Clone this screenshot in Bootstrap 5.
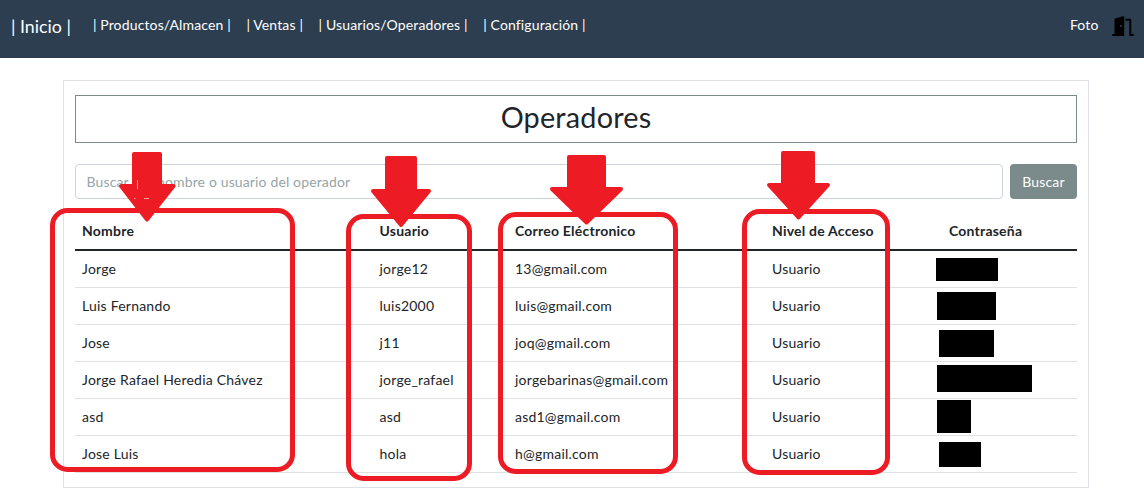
<!DOCTYPE html>
<html lang="es">
<head>
<meta charset="utf-8">
<title>Operadores</title>
<link href="https://cdn.jsdelivr.net/npm/bootstrap@5.3.0/dist/css/bootstrap.min.css" rel="stylesheet">
<style>
body{font-family:Lato,sans-serif;font-size:14px;line-height:1.5;color:#212529;overflow:hidden}
.topbar{background:#2c3e50;height:58px;padding:0 9px 0 11px;--bs-navbar-nav-link-padding-x:0}
.topbar a{color:#fff!important;white-space:nowrap}
.topbar .navbar-brand{font-size:17.8px;padding:0;margin:0 22px 7px 0;line-height:26px}
.topbar .navbar-nav{gap:15.5px;margin-bottom:8px}
.topbar .nav-link{padding:0;line-height:22px;letter-spacing:.14px}
.panel{width:1026px;height:408px;margin:22px 0 0 63px;padding:14px 11px;border:1px solid #dee2e6}
.heading{height:48px;border:1px solid #7b8a8b;font-size:28.8px;letter-spacing:.2px;font-weight:400;line-height:43px;margin:0 0 21px}
.search{gap:7px;margin-bottom:13px}
.search .form-control{height:35px;font-size:14px;letter-spacing:.14px;padding:5px 10.5px;border-color:#ced4da;border-radius:4px}
.search .form-control::placeholder{color:#95a5a6}
.search .btn{flex:none;width:67px;height:35px;background:#7b8a8b;color:#fff;font-size:14px;letter-spacing:.15px;padding:0;border-radius:4px}
.users{table-layout:fixed;margin:0;border-color:#dee2e6;letter-spacing:.22px}
.users th,.users td{height:37px;padding:0 7px;line-height:21px;vertical-align:middle;white-space:nowrap}
.users thead th{height:38px;border-bottom:2px solid #212529}
.marks{left:0;top:0}
</style>
<script src="https://cdn.jsdelivr.net/npm/bootstrap@5.3.0/dist/js/bootstrap.bundle.min.js"></script>
</head>
<body class="position-relative">
<nav class="navbar navbar-expand topbar">
  <a class="navbar-brand" href="#">| Inicio |</a>
  <div class="navbar-nav me-auto">
    <a class="nav-link" href="#">| Productos/Almacen |</a>
    <a class="nav-link" href="#">| Ventas |</a>
    <a class="nav-link" href="#">| Usuarios/Operadores |</a>
    <a class="nav-link" href="#">| Configuración |</a>
  </div>
  <div class="navbar-nav align-items-center">
    <a class="nav-link" href="#">Foto</a>
    <svg width="22" height="22" viewBox="0 0 22 22" style="margin:3px 1px 0 -2px"><path d="M2.5 3.5Q2.5 2.8 3.2 2.5L11 .2Q12.2 0 12.2 1V20H.8Q0 20 0 19T.8 18H2.5ZM13.5 2.8H18Q19.3 2.8 19.3 4V18H21Q22 18 22 19T21 20H17.3V4.8H13.5Z"/><circle cx="9" cy="10" r="1" fill="#2c3e50"/></svg>
  </div>
</nav>
<main class="panel">
  <h2 class="heading text-center">Operadores</h2>
  <form class="d-flex search">
    <input class="form-control" type="text" placeholder="Buscar por nombre o usuario del operador">
    <button class="btn" type="button">Buscar</button>
  </form>
  <table class="table users">
    <colgroup><col style="width:297.5px"><col style="width:135.5px"><col style="width:257px"><col style="width:177px"><col></colgroup>
    <thead><tr><th>Nombre</th><th>Usuario</th><th>Correo Eléctronico</th><th>Nivel de Acceso</th><th>Contraseña</th></tr></thead>
    <tbody>
      <tr><td>Jorge</td><td>jorge12</td><td>13@gmail.com</td><td>Usuario</td><td></td></tr>
      <tr><td>Luis Fernando</td><td>luis2000</td><td>luis@gmail.com</td><td>Usuario</td><td></td></tr>
      <tr><td>Jose</td><td>j11</td><td>joq@gmail.com</td><td>Usuario</td><td></td></tr>
      <tr><td>Jorge Rafael Heredia Chávez</td><td>jorge_rafael</td><td>jorgebarinas@gmail.com</td><td>Usuario</td><td></td></tr>
      <tr><td>asd</td><td>asd</td><td>asd1@gmail.com</td><td>Usuario</td><td></td></tr>
      <tr><td>Jose Luis</td><td>hola</td><td>h@gmail.com</td><td>Usuario</td><td></td></tr>
    </tbody>
  </table>
</main>
<!-- Annotations laid over the page: redactions, column outlines, arrows -->
<svg class="marks position-absolute pe-none" width="1144" height="495" viewBox="0 0 1144 495">
  <g shape-rendering="crispEdges">
    <rect x="936" y="258" width="62" height="23"/><rect x="937" y="292" width="59" height="28"/><rect x="939" y="330" width="55" height="27"/>
    <rect x="937" y="365" width="95" height="27"/><rect x="937" y="400" width="34" height="33"/><rect x="939" y="442" width="42" height="25"/>
  </g>
  <g fill="none" stroke="#ed1c24" stroke-width="5">
    <rect x="52.5" y="210.5" width="240" height="259" rx="15"/>
    <rect x="348.5" y="216.5" width="121" height="262" rx="15"/>
    <rect x="500.5" y="214.5" width="175" height="257" rx="15"/>
    <rect x="744.5" y="211.5" width="143" height="261" rx="15"/>
  </g>
  <g fill="#ed1c24" stroke="#ed1c24" stroke-width="4" stroke-linejoin="round">
    <path d="M134 154H160V186H173.5L147 219.5 121 186H134Z"/>
    <path d="M387 158H415V191H429L401 225 373 191H387Z"/>
    <path d="M569 157H604V189H621L586.5 222.5 552 189H569Z"/>
    <path d="M783 153H813V185H828L798.5 217.5 769 185H783Z"/>
  </g>
  <path d="M137.5 180V189M144 198.5H149M134 198.5H135.5" stroke="#f7a3a6" fill="none"/>
</svg>
</body>
</html>
